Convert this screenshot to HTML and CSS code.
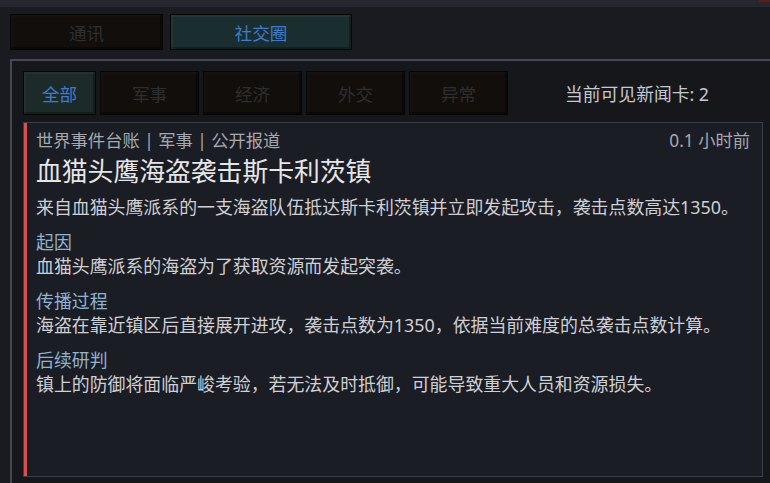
FILE: index.html
```html
<!DOCTYPE html>
<html lang="zh-CN">
<head>
<meta charset="UTF-8">
<meta name="viewport" content="width=device-width, initial-scale=1.0">
<title>社交圈</title>
<link rel="stylesheet" href="styles.css">
</head>
<body>
<div class="topbar">
  <span class="topbar-mark"></span>
</div>

<div class="main-tabs">
  <button class="tab tab-comm">通讯</button>
  <button class="tab tab-social active">社交圈</button>
</div>

<div class="panel">
  <div class="filter-row">
    <button class="tab filter filter-all active">全部</button>
    <button class="tab filter">军事</button>
    <button class="tab filter">经济</button>
    <button class="tab filter">外交</button>
    <button class="tab filter">异常</button>
    <span class="card-count">当前可见新闻卡: 2</span>
  </div>

  <div class="news-card">
    <div class="card-head">
      <span class="meta">世界事件台账 | 军事 | 公开报道</span>
      <span class="meta">0.1 小时前</span>
    </div>
    <h2 class="card-title">血猫头鹰海盗袭击斯卡利茨镇</h2>
    <p class="summary">来自血猫头鹰派系的一支海盗队伍抵达斯卡利茨镇并立即发起攻击，袭击点数高达1350。</p>

    <div class="section">
      <h3>起因</h3>
      <p>血猫头鹰派系的海盗为了获取资源而发起突袭。</p>
    </div>
    <div class="section">
      <h3>传播过程</h3>
      <p>海盗在靠近镇区后直接展开进攻，袭击点数为1350，依据当前难度的总袭击点数计算。</p>
    </div>
    <div class="section">
      <h3>后续研判</h3>
      <p>镇上的防御将面临严峻考验，若无法及时抵御，可能导致重大人员和资源损失。</p>
    </div>
  </div>
</div>
</body>
</html>
```

FILE: styles.css
```css
body {
  margin: 0;
  padding: 0;
  background: #1a1b20;
  font-family: "Noto Sans", "Noto Sans CJK SC", sans-serif;
  font-size: 17.9px;
  overflow: hidden;
  height: 483px;
}
.topbar {
  height: 7px;
  background: #26272f;
  display: flex;
  justify-content: flex-end;
}
.topbar-mark {
  width: 11px;
  height: 2px;
  background: #5e1d1b;
}
.main-tabs {
  display: flex;
  gap: 7px;
  padding: 7px 0 0 10px;
}
.tab {
  font-family: inherit;
  font-size: 17.6px;
  height: 36px;
  padding: 0;
  border: 1px solid #060606;
  background: #110e0c;
  color: #2f2e2e;
  box-shadow: inset 2px 2px 0 rgba(255, 255, 255, 0.02), inset -2px -2px 0 rgba(0, 0, 0, 0.35);
  cursor: pointer;
}
.tab.active {
  background: #1b2e2f;
  color: #3d7bcc;
  box-shadow: inset 2px 2px 0 rgba(255, 255, 255, 0.04), inset -2px -2px 0 rgba(0, 0, 0, 0.3);
}
.tab-comm {
  width: 153px;
}
.tab-social {
  width: 182px;
}
.panel {
  margin: 9px -20px 0 10px;
  border: 2px solid #474856;
  background: #16171b;
  padding: 10px 11px 20px 11px;
}
.filter-row {
  display: flex;
  align-items: center;
  gap: 4px;
}
.filter {
  width: 99px;
  height: 44px;
}
.filter-all {
  width: 73px;
}
.filter.active {
  background: #1c2b29;
}
.card-count {
  margin-left: 53px;
  color: #c5c9d1;
  font-size: 17.8px;
}
.news-card {
  margin-top: 7px;
  width: 740px;
  height: 355px;
  box-sizing: border-box;
  border: 1px solid #3a3d4a;
  background: #1b1d25;
  box-shadow: inset 3px 0 0 #d65050;
  padding: 8px 12px 0 12px;
}
.card-head {
  display: flex;
  justify-content: space-between;
  line-height: 20px;
}
.meta {
  color: #a5a8af;
  font-size: 17.3px;
}
.card-title {
  margin: 4px 0 0;
  font-size: 25.8px;
  font-weight: normal;
  line-height: 32px;
  color: #e6e6e8;
}
.summary {
  margin: 8px 0 0;
  line-height: 24px;
  color: #cfd0d4;
}
.section {
  margin-top: 11px;
}
.section h3 {
  margin: 0;
  font-size: 17.9px;
  font-weight: normal;
  line-height: 24px;
  color: #8fb3d0;
}
.section p {
  margin: 0;
  line-height: 24px;
  color: #cfd0d4;
}
```
